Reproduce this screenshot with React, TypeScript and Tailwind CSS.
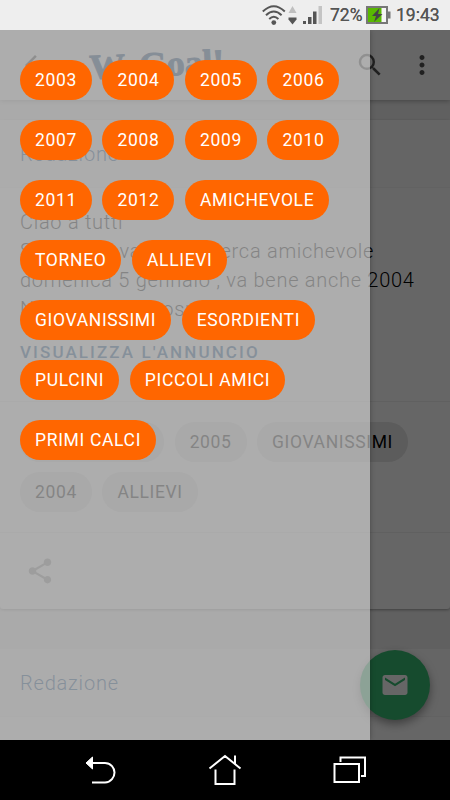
import React from "react";
import { MdSearch, MdMoreVert, MdShare, MdEmail, MdArrowBack } from "react-icons/md";

const filters: string[][] = [
  ["2003", "2004", "2005", "2006"],
  ["2007", "2008", "2009", "2010"],
  ["2011", "2012", "AMICHEVOLE"],
  ["TORNEO", "ALLIEVI"],
  ["GIOVANISSIMI", "ESORDIENTI"],
  ["PULCINI", "PICCOLI AMICI"],
  ["PRIMI CALCI"],
];

function StatusBar() {
  return (
    <div className="flex h-[30px] items-center bg-[#eeeeee] pl-[261px] text-[#555]">
      <svg width="26" height="22" viewBox="0 0 26 22" fill="none" stroke="#555" strokeWidth="2">
        <path d="M1.8 7.5Q12.8 -3 23.8 7.5" />
        <path d="M5 11.3Q12.8 3.8 20.6 11.3" />
        <path d="M8.2 15Q12.8 10.6 17.4 15" />
        <circle cx="12.8" cy="18.6" r="2.4" fill="#555" stroke="none" />
      </svg>
      <svg className="ml-px" width="9" height="20" viewBox="0 0 9 20">
        <path d="M4.5 1L8.5 8H.5z" fill="#bfbfbf" />
        <path d="M.5 12.500h8v2L4.500 19.500L.5 14.500z" fill="#555" />
      </svg>
      <svg className="ml-[5px]" width="22" height="20" viewBox="0 0 22 20">
        <path d="M1 16h3v3H1zM6 12h3.500v7H6zM11 6.500h3.500V19H11z" fill="#555" />
        <path d="M16.500 1H20v18h-3.500z" fill="#c4c4c4" />
      </svg>
      <span className="mt-px ml-[6px] w-[33px] text-[17.5px] leading-none whitespace-nowrap [text-shadow:0_0_0.5px_#555]">72%</span>
      <svg className="ml-[3px]" width="25" height="18" viewBox="0 0 25 18">
        <path d="M1 1h20v16H1z" fill="#f5f5f5" stroke="#777" strokeWidth="2" />
        <path d="M2 2h13.500v14H2z" fill="#59b800" />
        <path d="M22 5.500h2.500v7H22z" fill="#777" />
        <path d="M13.500 2L6 10h4l-2 6 8.500-8h-4.500z" fill="#444" />
      </svg>
      <span className="mt-px ml-[5px] text-[17.5px] leading-none [text-shadow:0_0_0.5px_#555]">19:43</span>
    </div>
  );
}

function Tag({ children }: { children: string }) {
  return (
    <span className="flex h-10 items-center rounded-full bg-[#e6e6e6] px-[15px] text-[17.5px] tracking-[0.64px] whitespace-nowrap text-black">
      {children}
    </span>
  );
}

function Author() {
  return (
    <h2 className="flex h-[68px] items-center border-b border-[#f4f4f4] bg-[#fcfcfc] px-5 text-[20px] font-light tracking-[0.8px] text-[#0a4c8c]">
      Redazione
    </h2>
  );
}

function Page() {
  return (
    <div className="h-full overflow-hidden bg-[#f0f0f0]">
      <header className="flex h-[70px] items-center bg-white shadow-[0_1px_5px_rgba(0,0,0,0.3)]">
        <MdArrowBack className="ml-5 size-[30px] shrink-0 text-[#444]" />
        <svg className="ml-[38px] shrink-0 overflow-visible" width="138" height="44" viewBox="0 0 138 44">
          <text x="2" y="36" textLength="135" lengthAdjust="spacingAndGlyphs" transform="rotate(-2.5 2 36)" className="fill-[#0a4078] stroke-[#0a4078] font-['Liberation_Serif'] text-[35px] font-bold">WeGoal!</text>
        </svg>
        <MdSearch className="ml-[129px] size-[30px] shrink-0 text-[#505050]" />
        <MdMoreVert className="ml-[22px] size-[30px] shrink-0 text-[#505050]" />
      </header>
      <article className="mt-5 h-[489px] rounded-[3px] bg-white shadow-[0_1px_3px_rgba(0,0,0,0.35)]">
        <Author />
        <div className="h-[214px] border-b border-[#f0f0f0] px-5 pt-5">
          <p className="text-[20px] leading-[29px] font-light tracking-[0.72px] whitespace-nowrap text-black">
            Ciao a tutti
            <br />Società novarese in cerca amichevole
            <br />domenica 5 gennaio , va bene anche 2004
            <br />Non possiamo ospitare
          </p>
          <div className="mt-[16px] text-[17px] leading-[24px] font-medium tracking-[2.1px] text-[#0a4c8c]">VISUALIZZA L'ANNUNCIO</div>
        </div>
        <div className="flex h-[131px] flex-col gap-[10px] border-b border-[#f0f0f0] px-5 pt-5">
          <div className="flex gap-[10.5px]">
            <Tag>AMICHEVOLE</Tag><Tag>2005</Tag><Tag>GIOVANISSIMI</Tag>
          </div>
          <div className="flex gap-[10.5px]">
            <Tag>2004</Tag><Tag>ALLIEVI</Tag>
          </div>
        </div>
        <MdShare className="mt-[23px] ml-[25px] size-[30px] text-[#a0a0a0]" />
      </article>
      <article className="mt-10 h-[120px] bg-white">
        <Author />
      </article>
    </div>
  );
}

function Drawer() {
  return (
    <aside className="absolute inset-y-0 left-0 flex w-[370px] flex-col gap-5 bg-[#dcdcdc]/60 pt-[30px] pl-5 shadow-[0_0_5px_rgba(0,0,0,0.3)]">
      {filters.map((row) => (
        <div key={row[0]} className="flex gap-[10.5px]">
          {row.map((label) => (
            <button key={label} className="h-10 rounded-full bg-[#ff6600] px-[15px] text-[17.5px] tracking-[0.66px] whitespace-nowrap text-white">
              {label}
            </button>
          ))}
        </div>
      ))}
    </aside>
  );
}

function NavBar() {
  return (
    <nav className="flex h-[60px] items-center justify-between bg-black pr-[83px] pl-[84px]">
      <svg width="34" height="32" viewBox="0 0 34 32" fill="none" stroke="#fff" strokeWidth="2">
        <path d="M7 9h14c6 0 9.500 5 9.500 9.500S27 28.500 21 28.500H8" />
        <path d="M2 9L8.500 3v12z" fill="#fff" stroke="#fff" strokeWidth="1" />
      </svg>
      <svg className="-ml-px" width="34" height="32" viewBox="0 0 34 32" fill="none" stroke="#fff" strokeWidth="2">
        <path d="M1.500 14.500L17 2l15.500 12.500M27 10V1.500M7.500 15.500V30h19V15.500" />
      </svg>
      <svg width="34" height="32" viewBox="0 0 34 32" fill="none" stroke="#fff" strokeWidth="2">
        <path d="M1.500 10h24.500v18H1.500zM7.500 8V3.500H32V22h-4" />
      </svg>
    </nav>
  );
}

export default function App() {
  return (
    <div className="flex h-[800px] w-[450px] flex-col overflow-hidden font-['Roboto',sans-serif]">
      <StatusBar />
      <main className="relative h-[710px] overflow-hidden">
        <Page />
        <button className="absolute right-5 bottom-5 flex size-[70px] items-center justify-center rounded-full bg-[#39bb73] text-white shadow-[0_4px_10px_rgba(0,0,0,0.4)]">
          <MdEmail className="size-[30px]" />
        </button>
        <div className="absolute inset-0 bg-black/60" />
        <Drawer />
      </main>
      <NavBar />
    </div>
  );
}
